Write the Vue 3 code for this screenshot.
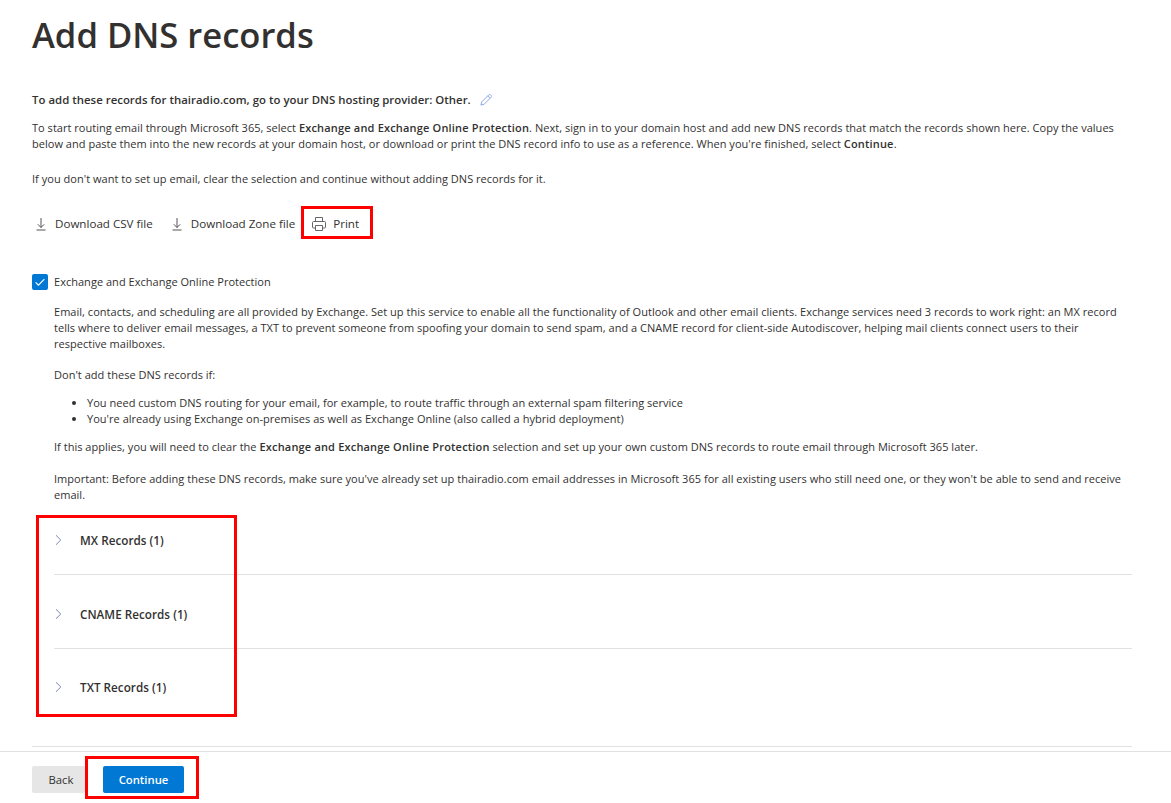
<template>
  <div class="page">
    <main class="content">
      <h1 class="title">Add DNS records</h1>

      <p class="provider">
        <strong>To add these records for thairadio.com, go to your DNS hosting provider: Other.</strong>
        <svg class="pencil" viewBox="0 0 16 16" width="14" height="14" fill="none" stroke="#7b9be0" stroke-width="1">
          <path d="M2.2 13.8l.9-3.6 8-8c.6-.6 1.6-.6 2.2 0l.5.5c.6.6.6 1.6 0 2.2l-8 8z" />
          <path d="M10 3.3l2.7 2.7" />
        </svg>
      </p>

      <p class="text">
        To start routing email through Microsoft 365, select <strong>Exchange and Exchange Online Protection</strong>. Next, sign in to your domain host and add new DNS records that match the records shown here. Copy the values<br />
        below and paste them into the new records at your domain host, or download or print the DNS record info to use as a reference. When you're finished, select <strong>Continue</strong>.
      </p>
      <p class="text gap-top">If you don't want to set up email, clear the selection and continue without adding DNS records for it.</p>

      <div class="actions">
        <button class="action download">
          <svg viewBox="0 0 16 16" width="16" height="16" fill="none" stroke="#555" stroke-width="1">
            <path d="M8 2v9.5M4.8 8.3L8 11.5l3.2-3.2M3.5 14h9" />
          </svg>
          Download CSV file
        </button>
        <button class="action download second">
          <svg viewBox="0 0 16 16" width="16" height="16" fill="none" stroke="#555" stroke-width="1">
            <path d="M8 2v9.5M4.8 8.3L8 11.5l3.2-3.2M3.5 14h9" />
          </svg>
          Download Zone file
        </button>
        <button class="action print">
          <svg viewBox="0 0 16 16" width="16" height="16" fill="none" stroke="#666" stroke-width="1">
            <path d="M4.5 5.5v-4h7v4M4.5 12H2.5a1 1 0 0 1-1-1V6.5a1 1 0 0 1 1-1h11a1 1 0 0 1 1 1V11a1 1 0 0 1-1 1h-2" />
            <path d="M4.5 9.5h7v5h-7z" />
          </svg>
          Print
        </button>
      </div>

      <label class="check-row">
        <span class="checkbox">
          <svg viewBox="0 0 16 16" width="14" height="14" fill="none" stroke="#fff" stroke-width="1.3">
            <path d="M3 8.5l3.2 3.2L13 4.8" />
          </svg>
        </span>
        Exchange and Exchange Online Protection
      </label>

      <section class="service">
        <p class="text">
          Email, contacts, and scheduling are all provided by Exchange. Set up this service to enable all the functionality of Outlook and other email clients. Exchange services need 3 records to work right: an MX record<br />
          tells where to deliver email messages, a TXT to prevent someone from spoofing your domain to send spam, and a CNAME record for client-side Autodiscover, helping mail clients connect users to their<br />
          respective mailboxes.
        </p>
        <p class="text gap-dont">Don't add these DNS records if:</p>
        <ul class="text bullets">
          <li>You need custom DNS routing for your email, for example, to route traffic through an external spam filtering service</li>
          <li>You're already using Exchange on-premises as well as Exchange Online (also called a hybrid deployment)</li>
        </ul>
        <p class="text gap-bullets">
          If this applies, you will need to clear the <strong>Exchange and Exchange Online Protection</strong> selection and set up your own custom DNS records to route email through Microsoft 365 later.
        </p>
        <p class="text gap-important">
          Important: Before adding these DNS records, make sure you've already set up thairadio.com email addresses in Microsoft 365 for all existing users who still need one, or they won't be able to send and receive<br />
          email.
        </p>

        <div class="records">
          <div v-for="record in records" :key="record" class="record">
            <svg viewBox="0 0 10 14" width="10" height="14" fill="none" stroke="#7a88b8" stroke-width="1">
              <path d="M2 2.3L6.8 7 2 11.7" />
            </svg>
            <span>{{ record }}</span>
          </div>
        </div>
      </section>
      <div class="end-line"></div>
    </main>

    <footer class="footer">
      <button class="btn back">Back</button>
      <button class="btn continue">Continue</button>
    </footer>

    <div class="mark mark-records"></div>
    <div class="mark mark-continue"></div>
  </div>
</template>

<script setup>
const records = ['MX Records (1)', 'CNAME Records (1)', 'TXT Records (1)']
</script>

<style>
body {
  background: #fff;
}
</style>

<style scoped>
.page {
  position: relative;
  height: 803px;
  overflow: hidden;
  font-family: "Open Sans", "Noto Sans", sans-serif;
  color: #323130;
  font-size: 11px;
  line-height: 16px;
  letter-spacing: 0.025px;
}

.content {
  padding: 0 39px 0 32px;
}

.title {
  margin: 0;
  padding-top: 12px;
  font-size: 34.6px;
  line-height: 46px;
  font-weight: 600;
  letter-spacing: 0;
}

.provider {
  margin: 34px 0 0;
  display: flex;
  align-items: center;
  gap: 8px;
  height: 16px;
  font-size: 11.38px;
}

.provider strong,
.text strong {
  font-weight: 600;
}

.text strong {
  letter-spacing: 0.18px;
}

.pencil {
  flex: none;
}

.text {
  margin: 12px 0 0;
  white-space: nowrap;
}

.gap-top {
  margin-top: 19px;
}

.gap-dont {
  margin-top: 15px;
}

.gap-important {
  margin-top: 16px;
}

.actions {
  display: flex;
  margin-top: 21px;
  margin-left: 1px;
}

.action {
  display: flex;
  align-items: center;
  gap: 6px;
  height: 32px;
  padding: 0;
  border: 0;
  background: none;
  font: inherit;
  font-size: 11.6px;
  color: inherit;
}

.second {
  margin-left: 16px;
}

.print {
  box-sizing: border-box;
  margin-left: 6px;
  margin-top: -2px;
  width: 72px;
  height: 33px;
  padding: 2px 0 0 7px;
  border: 3px solid #ff0000;
}

.check-row {
  display: flex;
  align-items: center;
  gap: 6px;
  margin-top: 34px;
  height: 16px;
}

.checkbox {
  display: flex;
  align-items: center;
  justify-content: center;
  width: 16px;
  height: 16px;
  border-radius: 2px;
  background: #0078d4;
}

.service {
  margin-left: 22px;
}

.service > .text:first-child {
  margin-top: 14px;
}

.bullets {
  margin: 12px 0 0;
  padding-left: 33px;
}

.gap-bullets {
  margin-top: 12px;
}

.records {
  margin-top: -2px;
}

.record {
  box-sizing: border-box;
  display: flex;
  align-items: center;
  gap: 16px;
  height: 74px;
  padding-top: 4px;
  border-bottom: 1px solid #e1e1e1;
  font-size: 11.7px;
  font-weight: 600;
}

.record:last-child {
  padding-top: 1px;
  border-bottom: 0;
}

.end-line {
  margin-top: 23px;
  border-top: 1px solid #e1e1e1;
}

.footer {
  position: absolute;
  left: 0;
  right: 0;
  bottom: 0;
  height: 52px;
  display: flex;
  align-items: flex-start;
  gap: 18px;
  padding: 14px 0 0 32px;
  border-top: 1px solid #e1e1e1;
  background: #fff;
  box-sizing: border-box;
}

.btn {
  height: 27px;
  border: 0;
  border-radius: 2px;
  font: inherit;
  font-size: 11.3px;
}

.back {
  width: 53px;
  padding: 0 0 0 5px;
  background: #e6e6e6;
  color: #323130;
}

.continue {
  width: 81px;
  background: #0078d4;
  color: #fff;
  font-weight: 600;
}

.mark {
  position: absolute;
  border: 3px solid #ff0000;
  box-sizing: border-box;
  pointer-events: none;
}

.mark-records {
  left: 36px;
  top: 515px;
  width: 201px;
  height: 202px;
}

.mark-continue {
  left: 85px;
  top: 756px;
  width: 114px;
  height: 43px;
}
</style>
